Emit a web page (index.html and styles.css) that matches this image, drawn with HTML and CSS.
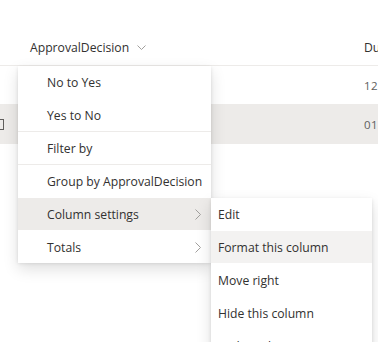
FILE: index.html
```html
<!DOCTYPE html>
<html lang="en">
<head>
  <meta charset="UTF-8">
  <title>List column menu</title>
  <link rel="stylesheet" href="styles.css">
</head>
<body>
  <div class="list">
    <div class="list-header">
      <div class="cell cell-decision">
        <span>ApprovalDecision</span>
        <svg class="chevron-down" width="9" height="5" viewBox="0 0 9 5"><path d="M0.5 0.5 L4.5 4.5 L8.5 0.5" fill="none" stroke="#a19f9d" stroke-width="1"/></svg>
      </div>
      <div class="cell cell-due">Due</div>
    </div>
    <div class="list-row">
      <div class="cell cell-decision"></div>
      <div class="cell cell-due small">12.02.2021</div>
    </div>
    <div class="list-row selected">
      <div class="cell cell-decision"><span class="row-icon"></span></div>
      <div class="cell cell-due small">01.03.2021</div>
    </div>
  </div>

  <!-- column context menu -->
  <ul class="menu main-menu">
    <li class="menu-item">No to Yes</li>
    <li class="menu-item sep">Yes to No</li>
    <li class="menu-item sep">Filter by</li>
    <li class="menu-item">Group by ApprovalDecision</li>
    <li class="menu-item active">Column settings
      <svg class="chevron-right" width="6" height="11" viewBox="0 0 6 11"><path d="M0.5 0.5 L5.5 5.5 L0.5 10.5" fill="none" stroke="#a19f9d" stroke-width="1"/></svg>
    </li>
    <li class="menu-item">Totals
      <svg class="chevron-right" width="6" height="11" viewBox="0 0 6 11"><path d="M0.5 0.5 L5.5 5.5 L0.5 10.5" fill="none" stroke="#a19f9d" stroke-width="1"/></svg>
    </li>
  </ul>

  <ul class="menu sub-menu">
    <li class="menu-item">Edit</li>
    <li class="menu-item hover">Format this column</li>
    <li class="menu-item">Move right</li>
    <li class="menu-item">Hide this column</li>
    <li class="menu-item">Wider column</li>
  </ul>
</body>
</html>
```

FILE: styles.css
```css
/* Page */
body {
  margin: 0;
  width: 378px;
  height: 342px;
  overflow: hidden;
  position: relative;
  background: #fff;
  font-family: 'Segoe UI', 'Open Sans', sans-serif;
  font-size: 12.2px;
  color: #323130;
}

/* List */
.list {
  padding-top: 30px;
}

.list-header,
.list-row {
  display: flex;
  border-bottom: 1px solid #edebe9;
}

.list-header {
  height: 35px;
  align-items: center;
}

.list-row {
  height: 38px;
  align-items: center;
}

.list-row.selected {
  background: #edebe9;
  border-bottom-color: #edebe9;
}

.cell {
  white-space: nowrap;
  overflow: hidden;
}

.cell-decision {
  flex: none;
  width: 364px;
  padding-left: 30px;
  display: flex;
  align-items: center;
  gap: 8px;
  box-sizing: border-box;
}

.cell-due {
  flex: 1;
}

.small {
  font-size: 11.5px;
  letter-spacing: 0.3px;
  color: #605e5c;
}

.row-icon {
  margin-left: -37px;
  width: 9px;
  height: 9px;
  border: 1px solid #605e5c;
}

/* Menus */
.menu {
  position: absolute;
  margin: 0;
  padding: 0;
  list-style: none;
  background: #fff;
  box-shadow: 0 6.4px 14.4px rgba(0, 0, 0, 0.13), 0 1.2px 3.6px rgba(0, 0, 0, 0.11);
}

.main-menu {
  left: 18px;
  top: 66px;
  width: 193px;
}

.sub-menu {
  left: 211px;
  top: 198px;
  width: 161px;
}

.menu-item {
  height: 32px;
  line-height: 34px;
  padding-left: 29px;
  white-space: nowrap;
  position: relative;
  border-bottom: 1px solid transparent;
}

.menu-item:last-child {
  border-bottom: 0;
}

.menu-item.sep {
  border-bottom-color: #edebe9;
}

.sub-menu .menu-item {
  padding-left: 7px;
}

.menu-item.active {
  background: #edebe9;
  background-clip: padding-box;
}

.menu-item.hover {
  background: #f3f2f1;
  background-clip: padding-box;
}

.chevron-right {
  position: absolute;
  right: 10px;
  top: 11px;
}
```
